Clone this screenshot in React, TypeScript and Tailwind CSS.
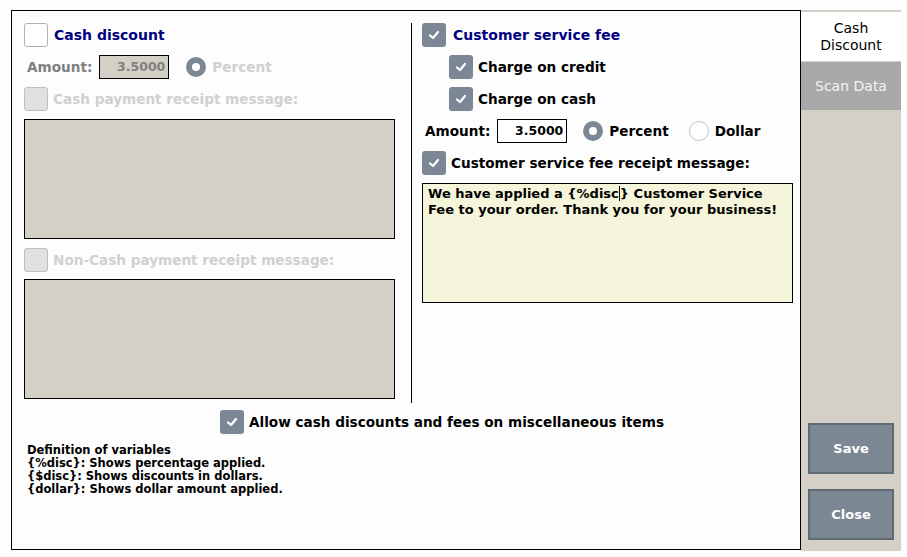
import React from 'react';

// ============================================================
// Cash discount / customer service fee settings dialog
// ============================================================

const font = { fontFamily: '"DejaVu Sans", Verdana, sans-serif' };

function CheckBox({ checked, disabled }: { checked?: boolean; disabled?: boolean }) {
  if (checked) {
    return (
      <div className="w-6 h-6 shrink-0 rounded-[3px] bg-[#7b8794] flex items-center justify-center">
        <svg width="14" height="14" viewBox="0 0 14 14" fill="none">
          <path d="M3 7.5 L6 10 L11 4" stroke="white" strokeWidth="2.2" strokeLinecap="round" strokeLinejoin="round" />
        </svg>
      </div>
    );
  }
  return (
    <div
      className={
        disabled
          ? 'w-6 h-6 shrink-0 rounded-[3px] bg-[#e0e0e0] border border-[#b8c0c8]'
          : 'w-6 h-6 shrink-0 rounded-[3px] bg-white border border-[#aab4be]'
      }
    />
  );
}

function Radio({ selected }: { selected?: boolean }) {
  if (selected) {
    return (
      <div className="w-5 h-5 shrink-0 rounded-full bg-[#7b8794] flex items-center justify-center">
        <div className="w-2 h-2 rounded-full bg-white" />
      </div>
    );
  }
  return <div className="w-5 h-5 shrink-0 rounded-full bg-white border border-[#c0c4c8]" />;
}

function LeftColumn() {
  return (
    <div className="w-[371px] flex flex-col">
      {/* Cash discount */}
      <div className="h-6 flex items-center gap-[6px]">
        <CheckBox />
        <span className="text-[14px] font-bold text-[#000080]">Cash discount</span>
      </div>

      <div className="h-6 mt-2 flex items-center">
        <span className="ml-[3px] text-[13.6px] font-bold text-[#808080]">Amount:</span>
        <div className="ml-[7px] w-[70px] h-6 bg-[#d4d0c8] border border-black flex items-center justify-end pr-[3px] text-[12.5px] font-bold text-[#808080]">
          3.5000
        </div>
        <div className="ml-[17px] flex items-center gap-[6px]">
          <Radio selected />
          <span className="text-[13.6px] font-bold text-[#d0d0d0]">Percent</span>
        </div>
      </div>

      <div className="h-6 mt-2 flex items-center gap-[5px]">
        <CheckBox disabled />
        <span className="text-[13.6px] font-bold text-[#d0d0d0]">Cash payment receipt message:</span>
      </div>
      <div className="mt-2 h-[120px] bg-[#d4d0c8] border border-black" />

      <div className="h-6 mt-[9px] flex items-center gap-[5px]">
        <CheckBox disabled />
        <span className="text-[13.6px] font-bold text-[#d0d0d0]">Non-Cash payment receipt message:</span>
      </div>
      <div className="mt-[7px] h-[120px] bg-[#d4d0c8] border border-black" />
    </div>
  );
}

function RightColumn() {
  return (
    <div className="w-[371px] flex flex-col">
      <div className="h-6 flex items-center gap-[7px]">
        <CheckBox checked />
        <span className="text-[14px] font-bold text-[#000080]">Customer service fee</span>
      </div>

      <div className="h-6 mt-2 ml-[27px] flex items-center gap-[5px]">
        <CheckBox checked />
        <span className="text-[13.6px] font-bold text-black">Charge on credit</span>
      </div>
      <div className="h-6 mt-2 ml-[27px] flex items-center gap-[5px]">
        <CheckBox checked />
        <span className="text-[13.6px] font-bold text-black">Charge on cash</span>
      </div>

      <div className="h-6 mt-2 flex items-center">
        <span className="ml-[3px] text-[13.6px] font-bold text-black">Amount:</span>
        <div className="ml-[7px] w-[70px] h-6 bg-white border border-black flex items-center justify-end pr-[3px] text-[12.5px] font-bold text-black">
          3.5000
        </div>
        <div className="ml-[16px] flex items-center gap-[6px]">
          <Radio selected />
          <span className="text-[13.6px] font-bold text-black">Percent</span>
        </div>
        <div className="ml-[20px] flex items-center gap-[6px]">
          <Radio />
          <span className="text-[13.6px] font-bold text-black">Dollar</span>
        </div>
      </div>

      <div className="h-6 mt-2 flex items-center gap-[5px]">
        <CheckBox checked />
        <span className="text-[13.6px] font-bold text-black">Customer service fee receipt message:</span>
      </div>
      <div className="mt-2 h-[120px] bg-[#f5f5dc] border border-black px-[5px] pt-[2px] text-[13px] leading-[16px] font-bold text-black">
        <span className="border-r border-black">We have applied a {'{%disc'}</span>
        {'} Customer Service Fee to your order. Thank you for your business!'}
      </div>
    </div>
  );
}

function SideBar() {
  return (
    <div className="w-[100px] h-[541px] bg-[#d4d0c8] flex flex-col pt-[2px]">
      <div className="h-[49px] bg-white flex items-center justify-center text-center text-[14px] leading-[17px] text-black">
        Cash
        <br />
        Discount
      </div>
      <div className="mt-px h-[48px] bg-[#a9a9a9] flex items-center justify-center text-[14px] text-[#f4f4f4]">
        Scan Data
      </div>
      <div className="flex-1" />
      <div className="flex flex-col gap-[15px] px-[7px] pb-[11px]">
        <button className="h-[51px] bg-[#7b8792] border-2 border-[#5f6a73] text-white text-[13px] font-bold">Save</button>
        <button className="h-[51px] bg-[#7b8792] border-2 border-[#5f6a73] text-white text-[13px] font-bold">Close</button>
      </div>
    </div>
  );
}

export default function App() {
  return (
    <div className="w-[907px] h-[557px] bg-[#fdfdfd] pl-[11px] pt-[10px] flex" style={font}>
      {/* Main panel */}
      <div className="w-[790px] h-[540px] border border-black pt-[12px] pl-[12px] flex flex-col">
        <div className="flex">
          <LeftColumn />
          <div className="ml-[16px] w-px h-[380px] bg-black" />
          <div className="ml-[10px]">
            <RightColumn />
          </div>
        </div>

        <div className="mt-[7px] ml-[196px] h-6 flex items-center gap-[5px]">
          <CheckBox checked />
          <span className="text-[13.6px] font-bold text-black">Allow cash discounts and fees on miscellaneous items</span>
        </div>

        <div className="mt-[10px] ml-[3px] text-[11.5px] leading-[13px] font-bold text-black">
          <div>Definition of variables</div>
          <div>{'{%disc}: Shows percentage applied.'}</div>
          <div>{'{$disc}:  Shows discounts in dollars.'}</div>
          <div>{'{dollar}: Shows dollar amount applied.'}</div>
        </div>
      </div>

      <SideBar />
    </div>
  );
}
